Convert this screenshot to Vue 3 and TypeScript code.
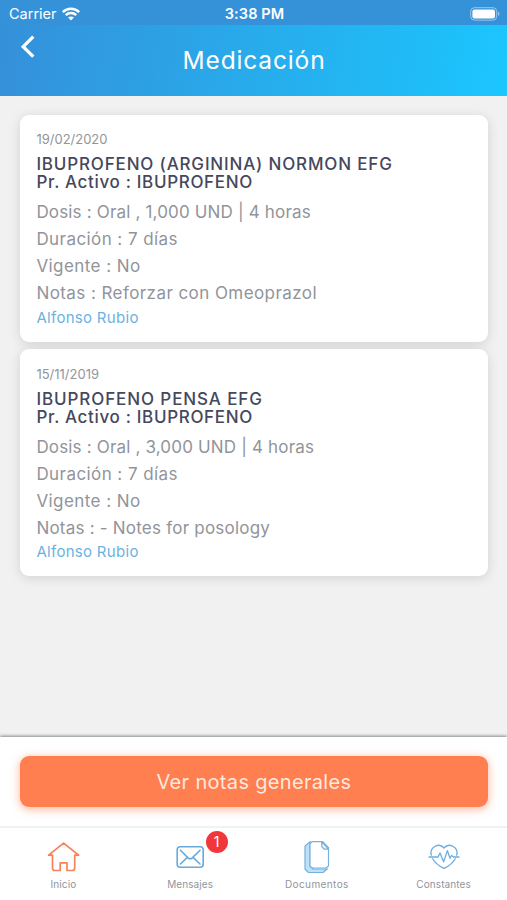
<script setup lang="ts">
interface Line {
  text: string
  fit: string
}
interface Medication {
  date: string
  name: Line
  active: string
  details: Line[]
  author: string
}

const medications: Medication[] = [
  {
    date: '19/02/2020',
    name: { text: 'IBUPROFENO (ARGININA) NORMON EFG', fit: 'name' },
    active: 'Pr. Activo : IBUPROFENO',
    details: [
      { text: 'Dosis : Oral , 1,000 UND | 4 horas', fit: 'dose' },
      { text: 'Duración : 7 días', fit: 'plain' },
      { text: 'Vigente : No', fit: 'plain' },
      { text: 'Notas : Reforzar con Omeoprazol', fit: 'plain' },
    ],
    author: 'Alfonso Rubio',
  },
  {
    date: '15/11/2019',
    name: { text: 'IBUPROFENO PENSA EFG', fit: 'name short' },
    active: 'Pr. Activo : IBUPROFENO',
    details: [
      { text: 'Dosis : Oral , 3,000 UND | 4 horas', fit: 'dose' },
      { text: 'Duración : 7 días', fit: 'plain' },
      { text: 'Vigente : No', fit: 'plain' },
      { text: 'Notas : - Notes for posology', fit: 'posology' },
    ],
    author: 'Alfonso Rubio',
  },
]
</script>

<template>
  <div class="screen">
    <div class="status">
      <div class="carrier">
        <span>Carrier</span>
        <svg width="18" height="14" viewBox="0 0 18 14" fill="none" stroke="#fff" stroke-width="2.5">
          <path d="M.8 5.1C5.4.6 12.6.6 17.2 5.1" />
          <path d="M3.8 8.2c2.9-2.8 7.5-2.8 10.4 0" />
          <path d="M6.1 10.5c1.6-1.5 4.2-1.5 5.8 0L9 13.5z" fill="#fff" stroke="none" />
        </svg>
      </div>
      <span class="time">3:38 PM</span>
      <svg class="battery" width="30" height="14" viewBox="0 0 30 14">
        <rect x=".7" y=".7" width="26" height="12.4" rx="3.8" fill="none" stroke="#fff" stroke-opacity=".5" />
        <rect x="2.4" y="2.4" width="22.6" height="9" rx="2.2" fill="#fff" />
        <path d="M28 4.8c1.9.6 1.9 3.6 0 4.2z" fill="#fff" fill-opacity=".5" />
      </svg>
    </div>

    <header class="header">
      <button class="back" aria-label="Atrás">
        <svg width="16" height="24" viewBox="0 0 16 24" fill="none" stroke="#fff" stroke-width="3.3">
          <path d="M13.3 1.7 3.2 11.7l10.1 10" />
        </svg>
      </button>
      <h1>Medicación</h1>
    </header>

    <main class="list">
      <article v-for="med in medications" :key="med.date" class="card">
        <div class="date">{{ med.date }}</div>
        <h2 :class="med.name.fit">{{ med.name.text }}</h2>
        <h2 class="active">{{ med.active }}</h2>
        <div class="details">
          <p v-for="line in med.details" :key="line.text" :class="line.fit">{{ line.text }}</p>
        </div>
        <div class="author">{{ med.author }}</div>
      </article>
    </main>

    <section class="action">
      <button class="notes-button">Ver notas generales</button>
    </section>

    <nav class="tabs">
      <a class="tab">
        <svg width="34" height="34" viewBox="0 0 34 34" fill="none" stroke="#f9805a" stroke-width="1.7" stroke-linejoin="round">
          <path d="M17.6 3.2 2.6 15.2h3.9V28q0 2.5 2.5 2.5h5.2v-7.7H21v7.7h5.2q2.5 0 2.5-2.5V15.2h3.9z" />
        </svg>
        <span class="home">Inicio</span>
      </a>
      <a class="tab">
        <svg width="34" height="34" viewBox="0 0 34 34" fill="none" stroke="#68a9dc" stroke-width="1.6" stroke-linecap="round">
          <rect x="4.2" y="6.8" width="26" height="20.4" rx="3" />
          <path d="m7.4 10.2 7.7 7.6q2.1 1.9 4.2 0l7.7-7.6M7.4 24l6.2-5.8M27 24l-6.2-5.8" />
        </svg>
        <span class="messages">Mensajes</span>
        <span class="badge">1</span>
      </a>
      <a class="tab">
        <svg width="34" height="34" viewBox="0 0 34 34" fill="none" stroke="#74b1df" stroke-width="1.2" stroke-linejoin="round">
          <path d="M10.2 1.6 5 6v23l3.4 3.5h14.8l4-3.8V29H13l-3-3V5z" fill="#bfe0f5" />
          <path d="M12 1.6h10.8l5.7 6v18.5L25.8 28H12.7L10 26.3V3.8z" fill="#fff" />
          <path d="M21.8 1.6v5.2l2.3 2.3h4.4z" fill="#e4f2fb" />
        </svg>
        <span class="documents">Documentos</span>
      </a>
      <a class="tab">
        <svg width="34" height="34" viewBox="0 0 34 34" fill="none" stroke="#6aade0" stroke-width="1.3" stroke-linecap="round" stroke-linejoin="round">
          <path d="M4.4 15.2C2 7.8 11.8 1.8 17 8c5.2-6.2 15-.2 12.6 7.2M5.7 18.7C8 22.8 12.5 26.2 17 28.4c4.5-2.2 9-5.6 11.3-9.7" />
          <path d="M2 17h9l2-4 3.6 8.8 3.8-11.2 2.6 7.7 1.5-2.8 2 1.5H32" />
        </svg>
        <span class="vitals">Constantes</span>
      </a>
    </nav>
  </div>
</template>

<style>
body {
  margin: 0;
}
</style>

<style scoped>
.screen {
  display: flex;
  flex-direction: column;
  width: 507px;
  height: 900px;
  overflow: hidden;
  background: #f1f1f1;
  font-family: Inter, 'Open Sans', sans-serif;
}
button {
  border: 0;
  padding: 0;
  font-family: inherit;
}
h1,
h2,
p {
  margin: 0;
  font-weight: 400;
}
.status {
  display: grid;
  grid-template-columns: 1fr auto 1fr;
  align-items: center;
  box-sizing: border-box;
  height: 25px;
  padding: 2px 7px 0 9px;
  background: #3592d9;
  color: #fff;
  font-size: 14.5px;
}
.carrier {
  display: flex;
  align-items: center;
  gap: 5px;
}
.time {
  font-weight: 600;
  letter-spacing: 0.1px;
}
.battery {
  justify-self: end;
}
.header {
  display: grid;
  grid-template-columns: 56px 1fr 56px;
  height: 71px;
  background: linear-gradient(100deg, #3590d9, #1bc6fe);
  color: #fff;
}
.back {
  display: flex;
  align-items: flex-start;
  padding: 10px 0 0 20px;
  background: none;
}
.header h1 {
  padding: 20px 0 0 1px;
  font-size: 24.5px;
  line-height: 30px;
  letter-spacing: 0.85px;
  text-align: center;
}
.list {
  display: flex;
  flex: 1;
  flex-direction: column;
  gap: 7px;
  padding: 19px 19.5px 0 20.4px;
}
.card {
  box-sizing: border-box;
  height: 227px;
  padding: 15px 16px 0;
  border-radius: 9px;
  background: #fff;
  box-shadow: 0 2px 12px rgba(0, 0, 0, 0.13);
  white-space: nowrap;
}
.card + .card {
  padding-top: 16px;
}
.date {
  color: #92959c;
  font-size: 13px;
  line-height: 19px;
}
.card h2 {
  color: #45485c;
  font-size: 17px;
  font-weight: 500;
  line-height: 18px;
}
.card .name {
  padding-top: 6px;
  letter-spacing: 0.83px;
}
.card .name.short {
  letter-spacing: 0.9px;
}
.card .active {
  letter-spacing: 0.67px;
}
.details {
  padding-top: 8px;
  color: #91949a;
  font-size: 17px;
  line-height: 27px;
}
.plain {
  letter-spacing: 0.43px;
}
.dose {
  letter-spacing: 0.17px;
}
.posology {
  letter-spacing: 0.22px;
}
.author {
  color: #6cb2df;
  font-size: 15px;
  line-height: 21px;
  letter-spacing: 0.3px;
}
.card + .card .author {
  line-height: 19px;
}
.action {
  box-sizing: border-box;
  height: 89px;
  padding: 19px 19.5px 0 20.4px;
  background: #fff;
  box-shadow: 0 -1px 3px rgba(0, 0, 0, 0.45);
}
.notes-button {
  display: block;
  width: 100%;
  height: 51px;
  border-radius: 9px;
  background: #ff7f50;
  box-shadow: 0 2px 10px rgba(255, 127, 80, 0.6);
  color: #ffe8df;
  font-size: 20px;
  letter-spacing: 0.33px;
}
.tabs {
  display: grid;
  grid-template-columns: repeat(4, 1fr);
  box-sizing: border-box;
  height: 74px;
  border-top: 2px solid #f2f2f3;
  background: #fff;
}
.tab {
  position: relative;
  display: flex;
  flex-direction: column;
  align-items: center;
  padding-top: 12px;
  color: #92959c;
  font-size: 10px;
  line-height: 14px;
  letter-spacing: 0.1px;
}
.tab span:not(.badge) {
  padding-top: 3px;
}
.tab .documents {
  letter-spacing: 0.4px;
}
.badge {
  position: absolute;
  top: 3px;
  left: 79px;
  width: 22px;
  height: 22px;
  border-radius: 50%;
  background: #f2373b;
  color: #fff;
  font-size: 14px;
  line-height: 22px;
  text-align: center;
}
</style>
